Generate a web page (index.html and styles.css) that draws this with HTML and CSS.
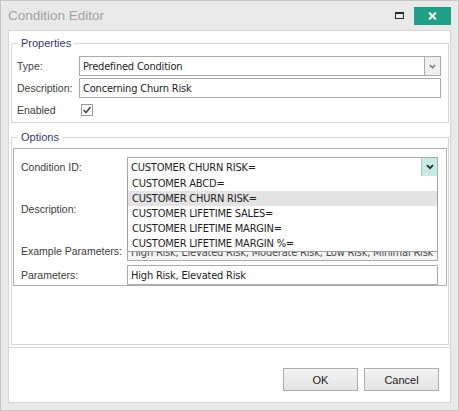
FILE: index.html
```html
<!DOCTYPE html>
<html lang="en">
<head>
    <meta charset="UTF-8">
    <title>Condition Editor</title>
    <link rel="stylesheet" href="styles.css">
</head>
<body>
    <div class="window">
        <!-- title bar -->
        <div class="titlebar">
            <span class="title">Condition Editor</span>
            <span class="max-icon"></span>
            <button class="close-btn">
                <svg width="9" height="8" viewBox="0 0 9 8">
                    <path d="M1 0.5 L8 7.5 M8 0.5 L1 7.5" stroke="#fff" stroke-width="2"/>
                </svg>
            </button>
        </div>

        <div class="main-panel">
            <fieldset class="group props">
                <legend>Properties</legend>
                <div class="props-grid">
                    <span class="field-label">Type:</span>
                    <div class="combo">
                        <span class="combo-text">Predefined Condition</span>
                        <span class="combo-btn">
                            <svg width="7" height="5" viewBox="0 0 7 5">
                                <path d="M0.8 1 L3.5 3.6 L6.2 1" fill="none" stroke="#7b7b7b" stroke-width="1.5"/>
                            </svg>
                        </span>
                    </div>

                    <span class="field-label">Description:</span>
                    <div class="textbox">Concerning Churn Risk</div>

                    <span class="field-label">Enabled</span>
                    <span class="checkbox">
                        <svg width="10" height="10" viewBox="0 0 10 10">
                            <path d="M1.5 5 L4 7.5 L8.5 2" fill="none" stroke="#4a4a4a" stroke-width="1.6"/>
                        </svg>
                    </span>
                </div>
            </fieldset>

            <fieldset class="group options">
                <legend>Options</legend>
                <div class="options-box">
                    <span class="field-label">Condition ID:</span>
                    <div class="combo combo-open">
                        <span class="combo-text">CUSTOMER CHURN RISK=</span>
                        <span class="combo-btn">
                            <svg width="8" height="6" viewBox="0 0 8 6">
                                <path d="M1 1.2 L4 4.2 L7 1.2" fill="none" stroke="#2b2b2b" stroke-width="1.8"/>
                            </svg>
                        </span>
                        <!-- open dropdown list -->
                        <div class="dropdown">
                            <div class="dd-item">CUSTOMER ABCD=</div>
                            <div class="dd-item selected">CUSTOMER CHURN RISK=</div>
                            <div class="dd-item">CUSTOMER LIFETIME SALES=</div>
                            <div class="dd-item">CUSTOMER LIFETIME MARGIN=</div>
                            <div class="dd-item">CUSTOMER LIFETIME MARGIN %=</div>
                        </div>
                    </div>

                    <span class="field-label">Description:</span>
                    <div class="textbox memo"></div>

                    <span class="field-label">Example Parameters:</span>
                    <div class="textbox readonly">High Risk, Elevated Risk, Moderate Risk, Low Risk, Minimal Risk</div>

                    <span class="field-label">Parameters:</span>
                    <div class="textbox">High Risk, Elevated Risk</div>
                </div>
            </fieldset>
        </div>

        <div class="footer">
            <button class="btn">OK</button>
            <button class="btn">Cancel</button>
        </div>
    </div>
</body>
</html>
```

FILE: styles.css
```css
body {
    margin: 0;
    padding: 0;
    background: #fff;
}

.window {
    width: 459px;
    height: 411px;
    box-sizing: border-box;
    border: 1px solid #c6c6c6;
    background: #e9e9e9;
    padding: 0 7px 7px;
    display: flex;
    flex-direction: column;
    font-family: "Liberation Sans", Arial, sans-serif;
}

/* title bar */
.titlebar {
    height: 29px;
    flex-shrink: 0;
    display: flex;
    align-items: center;
}

.title {
    flex: 1;
    font-size: 13.5px;
    color: #a3a3a3;
    padding-bottom: 1px;
}

.max-icon {
    width: 9px;
    height: 7px;
    box-sizing: border-box;
    border: 1px solid #2a2a2a;
    border-top-width: 2px;
    margin-right: 10px;
}

.close-btn {
    width: 37px;
    height: 18px;
    border: 0;
    padding: 0;
    background: #20a086;
    display: flex;
    align-items: center;
    justify-content: center;
}

/* main content */
.main-panel {
    height: 318px;
    flex-shrink: 0;
    box-sizing: border-box;
    border: 1px solid #d6d6d6;
    background: #fff;
    padding: 6px 0 2px;
    display: flex;
    flex-direction: column;
}

.group {
    margin: 0 1px 0 2px;
    border: 1px solid #d6d6d6;
    min-width: 0;
}

.group legend {
    font-size: 11px;
    line-height: 13px;
    color: #363a6e;
    padding: 0 3px;
}

.props {
    padding: 6px 7px 2px 5px;
}

.props legend {
    margin-left: 1px;
}

.options {
    margin-top: 8px;
    flex: 1;
    padding: 4px 1px 2px 1px;
    display: flex;
    flex-direction: column;
}

.options legend {
    margin-left: 5px;
}

.props-grid {
    display: grid;
    grid-template-columns: 62px 1fr;
    grid-auto-rows: 20px;
    row-gap: 2px;
    align-items: center;
}

.options-box {
    flex: 1;
    border: 1px solid #b0b0b0;
    padding: 8px 8px 0 7px;
    display: grid;
    grid-template-columns: 106px 1fr;
    grid-template-rows: 20px 56px 20px 20px;
    row-gap: 4px;
    align-content: start;
    align-items: center;
}

.field-label {
    font-size: 10.5px;
    color: #3d3d3d;
    white-space: nowrap;
}

/* inputs */
.combo,
.textbox {
    height: 20px;
    box-sizing: border-box;
    border: 1px solid #ababab;
    background: #fff;
    font-family: "DejaVu Sans Condensed", "DejaVu Sans", sans-serif;
    font-stretch: condensed;
    font-size: 11px;
    letter-spacing: -0.2px;
    color: #1e1e1e;
}

.combo {
    display: flex;
    align-items: center;
    position: relative;
}

.combo-text {
    flex: 1;
    padding-left: 3px;
    white-space: nowrap;
}

.combo-btn {
    width: 16px;
    align-self: stretch;
    box-sizing: border-box;
    border-left: 1px solid #ababab;
    background: #efefef;
    display: flex;
    align-items: center;
    justify-content: center;
}

.combo-open .combo-btn {
    background: #c6ece3;
    border-left-color: #9fcfc4;
}

.textbox {
    display: flex;
    align-items: center;
    padding-left: 3px;
    white-space: nowrap;
    overflow: hidden;
}

.textbox.memo {
    height: 56px;
}

.textbox.readonly {
    background: #f4f4f4;
    color: #4a4a4a;
    padding-top: 2px;
}

.checkbox {
    width: 12px;
    height: 12px;
    box-sizing: border-box;
    border: 1px solid #9a9a9a;
    margin-left: 2px;
    display: flex;
    align-items: center;
    justify-content: center;
}

/* open list of the condition combo */
.dropdown {
    position: absolute;
    top: 100%;
    left: -1px;
    right: -1px;
    border: 1px solid #a0a0a0;
    border-top: 0;
    background: #fff;
    z-index: 2;
}

.dd-item {
    height: 15px;
    line-height: 15px;
    padding-left: 4px;
    white-space: nowrap;
}

.dd-item.selected {
    background: #e3e3e3;
}

/* buttons */
.footer {
    height: 55px;
    flex-shrink: 0;
    box-sizing: border-box;
    border: 1px solid #d6d6d6;
    border-top: 0;
    background: #fff;
    display: flex;
    justify-content: flex-end;
    align-items: flex-start;
    gap: 6px;
    padding: 20px 11px 0 0;
}

.btn {
    width: 75px;
    height: 23px;
    padding: 0;
    border: 1px solid #adadad;
    background: linear-gradient(#f3f3f3, #e4e4e4);
    font-family: "Liberation Sans", Arial, sans-serif;
    font-size: 11px;
    color: #222;
}
```
